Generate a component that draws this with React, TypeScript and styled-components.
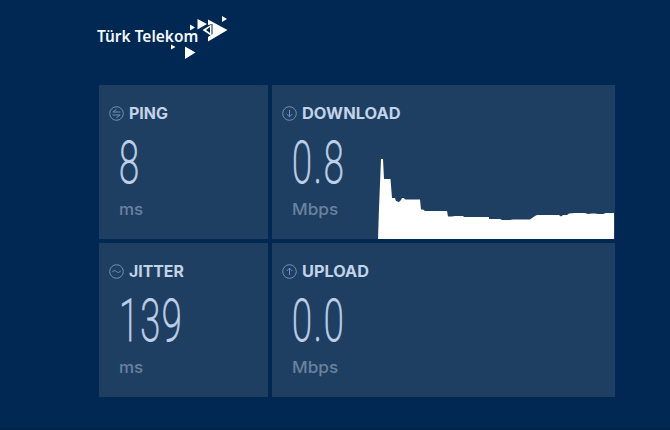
import React from "react";
import styled, { createGlobalStyle } from "styled-components";

const Global = createGlobalStyle`
  * { box-sizing: border-box; }
  body { margin: 0; background: #002853; }
`;

const Page = styled.main`
  width: 670px;
  height: 430px;
  overflow: hidden;
  background: #002853;
  border-bottom: 2px solid #00234a;
  font-family: "Inter", "Liberation Sans", sans-serif;
`;

const Header = styled.header`
  height: 85px;
  padding: 14px 0 0 97px;
  display: flex;
  align-items: flex-start;
`;

const Brand = styled.div`
  width: 101px;
  height: 30px;
  margin-top: 9px;
  font: 600 16px/26px "Noto Sans", sans-serif;
  color: #f4f8fd;
  white-space: nowrap;
`;

const BrandText = styled.span`
  display: inline-block;
  transform: scaleX(0.965);
  transform-origin: 0 50%;
`;

const BrandMark = styled.svg`
  margin-left: -30px;
  flex: none;
`;

const Grid = styled.section`
  display: grid;
  grid-template-columns: 169px 343px;
  grid-template-rows: 154px 154px;
  gap: 4px;
  margin-left: 99px;
`;

const Card = styled.article`
  display: flex;
  background: #1f3f62;
`;

const Metric = styled.div`
  flex: none;
  width: 106px;
  padding: 20px 0 0 10px;
`;

const Title = styled.h2`
  display: flex;
  align-items: center;
  gap: 5px;
  height: 17px;
  margin: 0;
  color: #c3d3e8;
  white-space: nowrap;
`;

const TitleIcon = styled.svg`
  flex: none;
`;

const TitleText = styled.span<{ $scale: number }>`
  font: 650 15.5px/17px "Inter", sans-serif;
  transform: scaleX(${(p) => p.$scale});
  transform-origin: 0 50%;
`;

const Value = styled.div<{ $spacing: number }>`
  height: 60px;
  margin: 11px 0 0 10px;
  font: 200 58.5px/60px "Roboto", sans-serif;
  letter-spacing: ${(p) => p.$spacing}px;
  color: #bfd0e8;
  -webkit-text-stroke: 0.9px #bfd0e8;
  white-space: nowrap;
  transform: scaleX(0.62);
  transform-origin: 0 50%;
`;

const Unit = styled.div<{ $scale: number }>`
  margin: 6px 0 0 10px;
  font: 500 16.5px/20px "Inter", sans-serif;
  color: #6a829e;
  white-space: nowrap;
  transform: scaleX(${(p) => p.$scale});
  transform-origin: 0 50%;
`;

const Chart = styled.svg`
  align-self: flex-end;
  flex: none;
  display: block;
`;

type IconKind = "ping" | "down" | "up" | "wave";

const paths: Record<IconKind, string> = {
  ping: "M11.500 6H3.800L7.600 3.200M3.500 9H11.200L7.400 11.800",
  down: "M7.5 4V10.8M4.7 8L7.5 10.8L10.3 8",
  up: "M7.5 11V4.2M4.7 7L7.5 4.2L10.3 7",
  wave: "M3.4 8.2C4.6 6 6 6.2 7.5 7.5S10.4 9 11.6 6.8",
};

const Icon = ({ kind }: { kind: IconKind }) => (
  <TitleIcon width="15" height="15" viewBox="0 0 15 15" fill="none" stroke="#7190b4" strokeWidth="1">
    <circle cx="7.5" cy="7.5" r="6.8" />
    <path d={paths[kind]} />
  </TitleIcon>
);

interface MetricProps {
  icon: IconKind;
  title: string;
  titleScale: number;
  value: string;
  spacing?: number;
  unit: string;
  unitScale?: number;
  children?: React.ReactNode;
}

const MetricCard = ({ icon, title, titleScale, value, spacing = 0, unit, unitScale = 1, children }: MetricProps) => (
  <Card>
    <Metric>
      <Title>
        <Icon kind={icon} />
        <TitleText $scale={titleScale}>{title}</TitleText>
      </Title>
      <Value $spacing={spacing}>{value}</Value>
      <Unit $scale={unitScale}>{unit}</Unit>
    </Metric>
    {children}
  </Card>
);

export default function App() {
  return (
    <Page>
      <Global />
      <Header>
        <Brand><BrandText>Türk Telekom</BrandText></Brand>
        <BrandMark width="62" height="48" viewBox="168 14 62 48" fill="#fff">
          <path d="M222 16L227 19L222 22ZM190 24.5L195 27.5L190 30.5ZM197.500 19L207 24L197.500 29.500ZM171 44.500L175.500 47L171 49.500ZM185 46.500L195.500 52.500L185 59Z" />
          <path d="M208 19.500L227.500 30L208 41.500V37L212.500 34V24L208 25Z" />
          <path fillRule="evenodd" d="M202.500 30L211.500 24.500V36ZM206 30L210 33V27Z" />
        </BrandMark>
      </Header>
      <Grid>
        <MetricCard icon="ping" title="PING" titleScale={1.03} value="8" unit="ms" unitScale={1.03} />
        <MetricCard icon="down" title="DOWNLOAD" titleScale={1.06} value="0.8" spacing={3} unit="Mbps" unitScale={1.04}>
          <Chart width="237" height="82" viewBox="378 157 237 82">
            <path fill="#fff" d="M378 239L379 208L381 159H383L384 179H390.500L392 198H395L396 201L399 202L401 200L402 198H404L405 199.500H420L421 209.500H423L425 211H447L448 216.500H452L455 216H463L464 217H489V219H500L502 220H510L513 219.500H530L535 216L537 215H559L561 216.500L563 215H567L569 213.500L575 213H585L588 214L592 213.500H595L598 214H603L606 213H614V239Z" />
          </Chart>
        </MetricCard>
        <MetricCard icon="wave" title="JITTER" titleScale={1.02} value="139" spacing={2.2} unit="ms" unitScale={1.03} />
        <MetricCard icon="up" title="UPLOAD" titleScale={1.05} value="0.0" spacing={3} unit="Mbps" unitScale={1.04} />
      </Grid>
    </Page>
  );
}
